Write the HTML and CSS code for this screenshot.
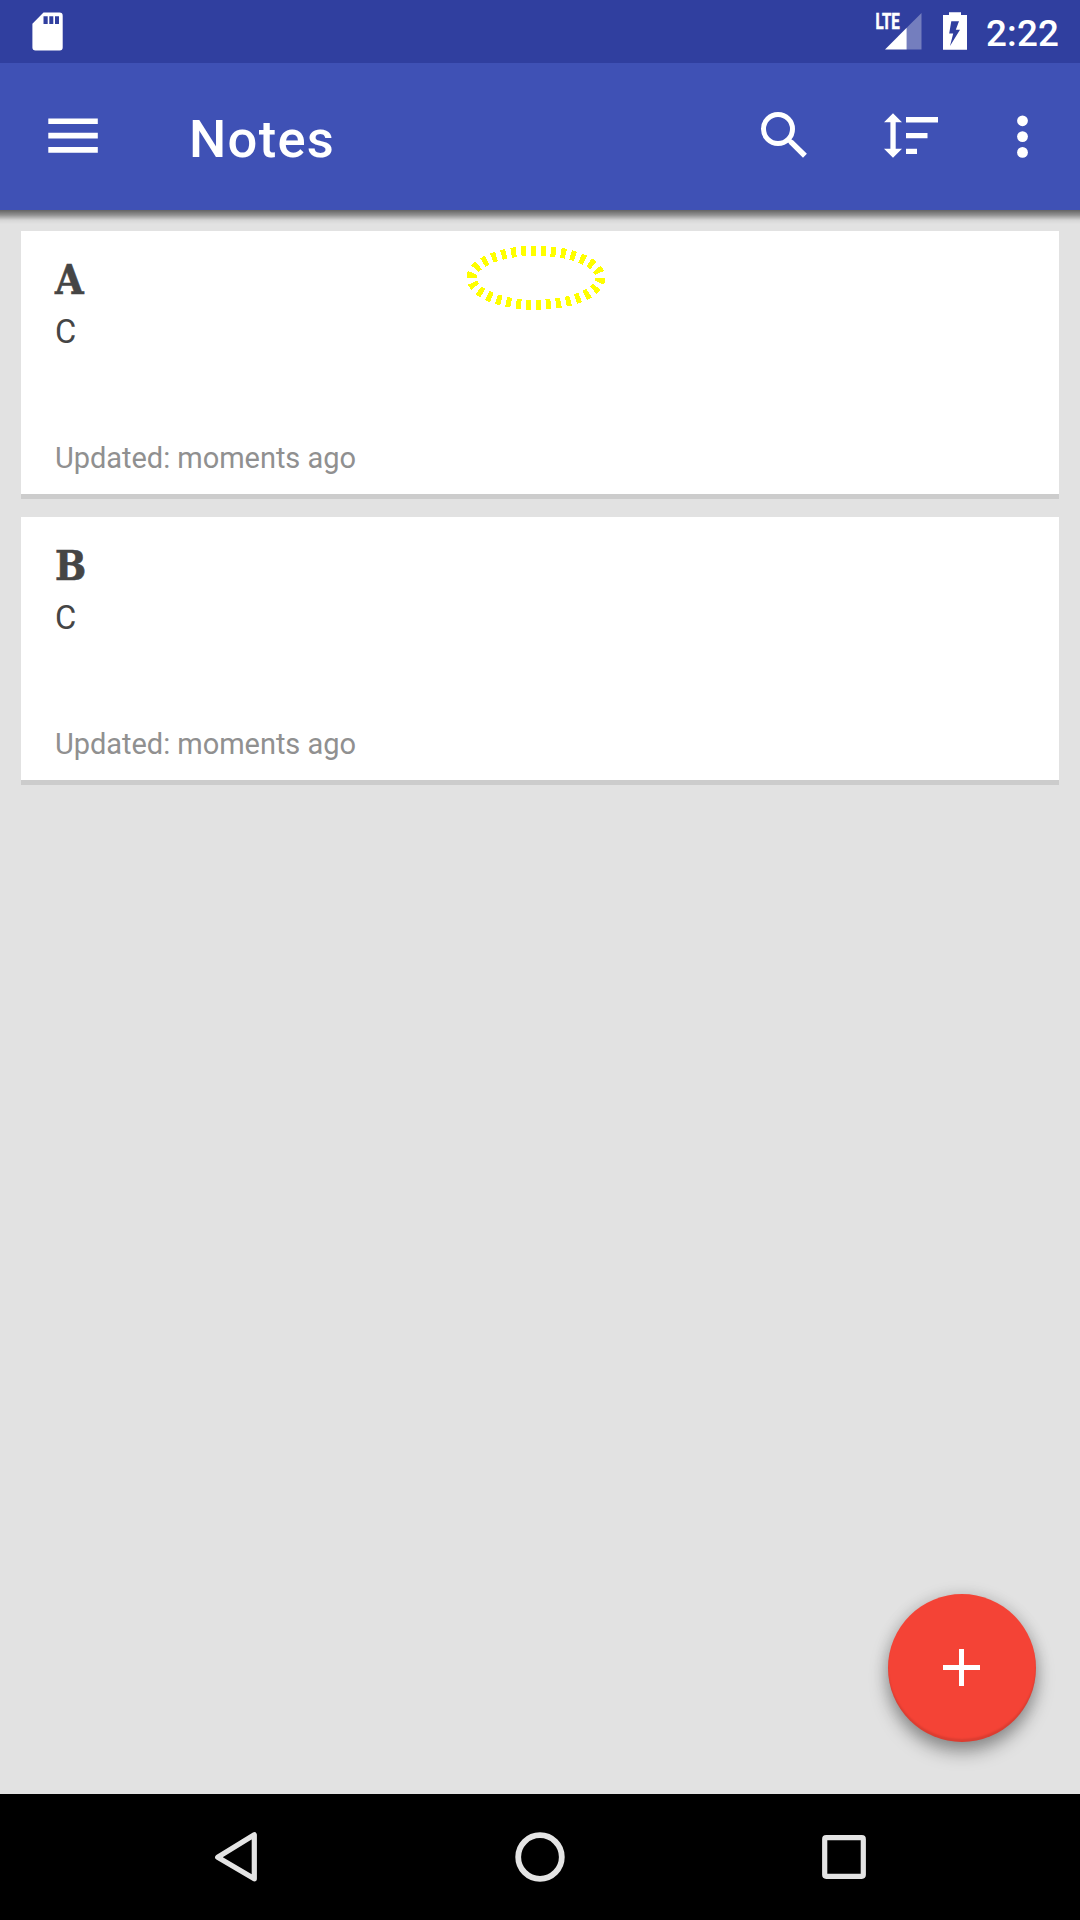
FILE: index.html
```html
<!DOCTYPE html>
<html lang="en">
<head>
<meta charset="utf-8">
<title>Notes</title>
<link rel="stylesheet" href="styles.css">
</head>
<body>
<div class="screen">
  <header class="status-bar">
    <svg class="sd-icon" viewBox="32 12 31 39" aria-hidden="true">
      <path fill="#fff" fill-rule="evenodd" d="M43.5 12.5H59.5Q62.7 12.5 62.7 15.7V47.5Q62.7 50.5 59.7 50.5H35.5Q32.4 50.5 32.4 47.5V23.8ZM43.5 16.3V24H47.7V16.3ZM49.3 16.3V24H53.3V16.3ZM55 16.3V24H59V16.3Z"/>
    </svg>
    <div class="status-right">
      <svg class="signal-icon" viewBox="870 6 52 44" aria-hidden="true">
        <path fill="#fff" fill-opacity=".33" d="M906.7 27.8 921.5 13V49.5H906.7Z"/>
        <path fill="#fff" d="M885 49.5 906.7 27.8V49.5Z"/>
        <text class="lte" x="875.6" y="29" textLength="24.2" lengthAdjust="spacingAndGlyphs">LTE</text>
      </svg>
      <svg class="battery-icon" viewBox="943 12 24 38" aria-hidden="true">
        <path fill="#fff" fill-rule="evenodd" d="M949 12.3H961V15H967V49.8H943V15H949ZM951.3 21.3 949.2 33.6H953.2L950 46 960 29.8H955.8L959 21.3Z"/>
      </svg>
      <span class="clock">2:22</span>
    </div>
  </header>

  <div class="app-bar">
    <svg class="menu-icon" viewBox="48 117 50 38" aria-hidden="true">
      <path fill="#fff" d="M48.3 118.4H97.8V124.1H48.3ZM48.3 132.8H97.8V138.5H48.3ZM48.3 147.1H97.8V152.8H48.3Z"/>
    </svg>
    <h1 class="title">Notes</h1>
    <div class="actions">
      <svg class="search-icon" viewBox="760 111 48 48" aria-hidden="true">
        <circle cx="778" cy="129" r="14.5" fill="none" stroke="#fff" stroke-width="5"/>
        <path fill="#fff" d="M789.7 143.2 792.8 140.1 806.9 153.8 803 157.7 789.7 144.6ZM786 139.5 788.5 137 793.5 141 790 145Z"/>
      </svg>
      <svg class="sort-icon" viewBox="884 112 55 46" aria-hidden="true">
        <path fill="#fff" d="M893 113.2 902 122.3H895.7V148.8H902L893 157.8 884 148.8H890.4V122.3H884ZM906 117H938V122.4H906ZM906 133H927.5V138.2H906ZM906 148.8H917V154.1H906Z"/>
      </svg>
      <svg class="more-icon" viewBox="1016 114 13 45" aria-hidden="true">
        <g fill="#fff"><circle cx="1022.5" cy="120.8" r="5.4"/><circle cx="1022.5" cy="136.6" r="5.4"/><circle cx="1022.5" cy="152.4" r="5.4"/></g>
      </svg>
    </div>
  </div>

  <main class="notes">
    <article class="note">
      <h2 class="note-title">A</h2>
      <p class="note-body">C</p>
      <p class="note-meta">Updated: moments ago</p>
      <svg class="highlight" viewBox="466 245 140 66" aria-hidden="true">
        <ellipse cx="536" cy="277.8" rx="64.5" ry="27" pathLength="300" fill="none" stroke="#ff0" stroke-width="10" stroke-dasharray="5 5" shape-rendering="crispEdges"/>
      </svg>
    </article>
    <article class="note">
      <h2 class="note-title">B</h2>
      <p class="note-body">C</p>
      <p class="note-meta">Updated: moments ago</p>
    </article>
    <button class="fab" aria-label="Add note">
      <svg class="plus-icon" viewBox="0 0 37 37" aria-hidden="true"><path fill="#fff" d="M16 0H21V16H37V21H21V37H16V21H0V16H16Z"/></svg>
    </button>
  </main>

  <nav class="nav-bar">
    <svg class="back-icon" viewBox="215 1832 42 50" aria-hidden="true">
      <path fill="none" stroke="#e4e4e4" stroke-width="5.2" stroke-linejoin="round" d="M254.3 1834.8V1878.8L217.7 1857.2Z"/>
    </svg>
    <svg class="home-icon" viewBox="515 1832 50 50" aria-hidden="true">
      <circle cx="540" cy="1857" r="21.8" fill="none" stroke="#e4e4e4" stroke-width="5.8"/>
    </svg>
    <svg class="recent-icon" viewBox="822 1835 44 44" aria-hidden="true">
      <rect x="824.7" y="1837.7" width="38.6" height="38.6" rx="1.5" fill="none" stroke="#e4e4e4" stroke-width="5.2"/>
    </svg>
  </nav>
</div>
</body>
</html>
```
FILE: styles.css
```css
* { box-sizing: border-box; }

body, h1, h2, p { margin: 0; }

body { font-family: Roboto, "Liberation Sans", sans-serif; }

svg { display: block; flex: none; }

.screen {
  display: flex;
  flex-direction: column;
  width: 1080px;
  height: 1920px;
  overflow: hidden;
  background: #e2e2e2;
}

.status-bar {
  display: flex;
  justify-content: space-between;
  align-items: flex-start;
  height: 63px;
  padding: 6px 21px 0 32px;
  background: #303f9f;
}

.sd-icon { width: 31px; height: 39px; margin-top: 6px; }
.status-right { display: flex; }
.signal-icon { width: 52px; height: 44px; margin-right: 21px; overflow: visible; }
.battery-icon { width: 24px; height: 38px; margin: 6px 19px 0 0; }
.lte { fill: #fff; stroke: #fff; stroke-width: .6px; font-size: 22px; font-weight: 700; }

.clock {
  width: 73px;
  margin-top: 6px;
  color: #fff;
  font-size: 36.75px;
  font-weight: 500;
  line-height: 43px;
  letter-spacing: .2px;
  white-space: nowrap;
}

.app-bar {
  position: relative;
  z-index: 1;
  display: flex;
  align-items: flex-start;
  height: 147px;
  padding-left: 48px;
  background: #3f51b5;
}

.app-bar::after {
  content: "";
  position: absolute;
  top: 100%;
  left: 0;
  right: 0;
  height: 14px;
  background: linear-gradient(rgba(0, 0, 0, .56), rgba(0, 0, 0, .36) 35%, rgba(0, 0, 0, .06) 72%, transparent);
}

.menu-icon { width: 50px; height: 38px; margin-top: 54px; }

.title {
  margin: 46px 0 0 91px;
  color: #fff;
  font-size: 52.5px;
  font-weight: 500;
  line-height: 61px;
  letter-spacing: 1.3px;
}

.actions {
  display: flex;
  align-items: flex-start;
  margin: 48px 51px 0 auto;
}

.search-icon { width: 48px; height: 48px; margin-right: 76px; }
.sort-icon { width: 55px; height: 46px; margin: 1px 77px 0 0; }
.more-icon { width: 13px; height: 45px; margin-top: 3px; }

.notes {
  position: relative;
  display: flex;
  flex: 1;
  flex-direction: column;
  gap: 18px;
  padding: 21px;
}

.note {
  position: relative;
  display: flex;
  flex-direction: column;
  height: 268px;
  padding: 25px 34px 0;
  background: #fff;
  border-bottom: 5px solid #ccc;
}

.note-title {
  color: #454545;
  font-family: "DejaVu Serif Condensed", "DejaVu Serif", serif;
  font-size: 41px;
  font-stretch: condensed;
  font-weight: 700;
  line-height: 48px;
  -webkit-text-stroke: .6px #454545;
}

.note-body {
  margin-top: 7px;
  color: #454545;
  font-size: 34px;
  line-height: 40px;
  transform: scaleX(.96);
  transform-origin: 0 0;
}

.note-meta {
  margin-top: 90px;
  color: #909090;
  font-size: 29px;
  line-height: 34px;
  letter-spacing: -.04px;
}

.highlight {
  position: absolute;
  top: 14px;
  left: 445px;
  width: 140px;
  height: 66px;
}

.fab {
  position: absolute;
  right: 44px;
  bottom: 52px;
  display: flex;
  width: 148px;
  height: 148px;
  padding: 55px 0 0 55px;
  border: 0;
  border-radius: 50%;
  background: #f44336;
  box-shadow: 0 10px 18px rgba(0, 0, 0, .36), 0 0 16px rgba(0, 0, 0, .12), inset 0 -3px 2px rgba(0, 0, 0, .1);
  align-items: flex-start;
}

.plus-icon { width: 37px; height: 37px; }

.nav-bar {
  display: flex;
  align-items: center;
  justify-content: space-between;
  height: 126px;
  padding: 0 214px 0 215px;
  background: #000;
}

.back-icon { width: 42px; height: 50px; }
.home-icon { width: 50px; height: 50px; }
.recent-icon { width: 44px; height: 44px; }
```
